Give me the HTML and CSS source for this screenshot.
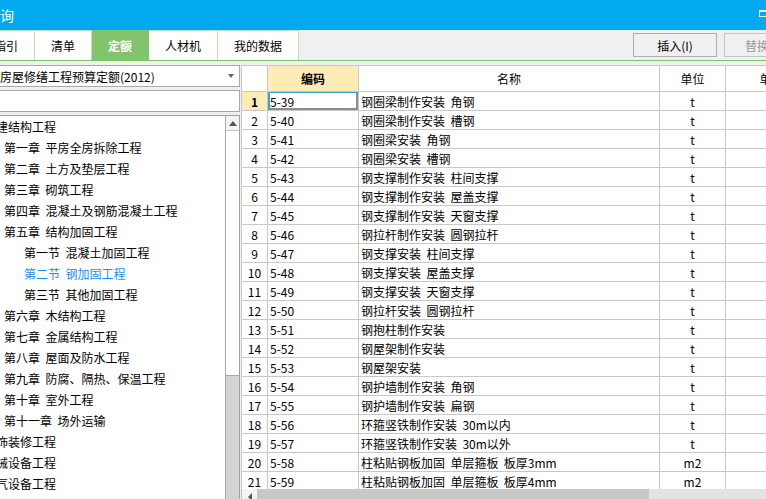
FILE: index.html
```html
<!DOCTYPE html>
<html lang="zh-CN">
<head>
<meta charset="utf-8">
<title>查询</title>
<link rel="stylesheet" href="styles.css">
</head>
<body>
<div class="app">
  <div class="titlebar">
    <span class="title">查询</span>
    <span class="max-icon"></span>
  </div>
  <div class="tabbar">
    <div class="tabs">
      <div class="tab first">指引</div>
      <div class="tab">清单</div>
      <div class="tab active">定额</div>
      <div class="tab">人材机</div>
      <div class="tab">我的数据</div>
    </div>
    <div class="actions">
      <button class="btn">插入(I)</button>
      <button class="btn disabled">替换</button>
    </div>
  </div>
  <div class="content">
    <div class="left">
      <div class="select">
        <span class="select-text">北京市房屋修缮工程预算定额(2012)</span>
        <span class="caret"></span>
      </div>
      <div class="search"></div>
      <div class="tree">
        <ul class="tree-list">
          <li class="l0">土建结构工程</li>
          <li class="l1">第一章  平房全房拆除工程</li>
          <li class="l1">第二章  土方及垫层工程</li>
          <li class="l1">第三章  砌筑工程</li>
          <li class="l1">第四章  混凝土及钢筋混凝土工程</li>
          <li class="l1">第五章  结构加固工程</li>
          <li class="l2">第一节  混凝土加固工程</li>
          <li class="l2 selected">第二节  钢加固工程</li>
          <li class="l2">第三节  其他加固工程</li>
          <li class="l1">第六章  木结构工程</li>
          <li class="l1">第七章  金属结构工程</li>
          <li class="l1">第八章  屋面及防水工程</li>
          <li class="l1">第九章  防腐、隔热、保温工程</li>
          <li class="l1">第十章  室外工程</li>
          <li class="l1">第十一章  场外运输</li>
          <li class="l0">装饰装修工程</li>
          <li class="l0">机械设备工程</li>
          <li class="l0">电气设备工程</li>
        </ul>
        <div class="vscroll">
          <div class="vs-up"><span class="tri-up"></span></div>
          <div class="vs-thumb"></div>
        </div>
      </div>
    </div>
    <div class="right">
      <div class="grid-wrap">
        <table class="grid">
          <colgroup>
            <col class="c-num"><col class="c-code"><col class="c-name"><col class="c-unit"><col class="c-price"><col class="c-rest">
          </colgroup>
          <thead>
            <tr>
              <th class="corner"></th>
              <th class="hl">编码</th>
              <th>名称</th>
              <th>单位</th>
              <th>单价</th>
              <th></th>
            </tr>
          </thead>
          <tbody>
            <tr><td class="num cur">1</td><td class="code focus">5-39</td><td class="name">钢圈梁制作安装  角钢</td><td class="unit">t</td><td></td><td></td></tr>
            <tr><td class="num">2</td><td class="code">5-40</td><td class="name">钢圈梁制作安装  槽钢</td><td class="unit">t</td><td></td><td></td></tr>
            <tr><td class="num">3</td><td class="code">5-41</td><td class="name">钢圈梁安装  角钢</td><td class="unit">t</td><td></td><td></td></tr>
            <tr><td class="num">4</td><td class="code">5-42</td><td class="name">钢圈梁安装  槽钢</td><td class="unit">t</td><td></td><td></td></tr>
            <tr><td class="num">5</td><td class="code">5-43</td><td class="name">钢支撑制作安装  柱间支撑</td><td class="unit">t</td><td></td><td></td></tr>
            <tr><td class="num">6</td><td class="code">5-44</td><td class="name">钢支撑制作安装  屋盖支撑</td><td class="unit">t</td><td></td><td></td></tr>
            <tr><td class="num">7</td><td class="code">5-45</td><td class="name">钢支撑制作安装  天窗支撑</td><td class="unit">t</td><td></td><td></td></tr>
            <tr><td class="num">8</td><td class="code">5-46</td><td class="name">钢拉杆制作安装  圆钢拉杆</td><td class="unit">t</td><td></td><td></td></tr>
            <tr><td class="num">9</td><td class="code">5-47</td><td class="name">钢支撑安装  柱间支撑</td><td class="unit">t</td><td></td><td></td></tr>
            <tr><td class="num">10</td><td class="code">5-48</td><td class="name">钢支撑安装  屋盖支撑</td><td class="unit">t</td><td></td><td></td></tr>
            <tr><td class="num">11</td><td class="code">5-49</td><td class="name">钢支撑安装  天窗支撑</td><td class="unit">t</td><td></td><td></td></tr>
            <tr><td class="num">12</td><td class="code">5-50</td><td class="name">钢拉杆安装  圆钢拉杆</td><td class="unit">t</td><td></td><td></td></tr>
            <tr><td class="num">13</td><td class="code">5-51</td><td class="name">钢抱柱制作安装</td><td class="unit">t</td><td></td><td></td></tr>
            <tr><td class="num">14</td><td class="code">5-52</td><td class="name">钢屋架制作安装</td><td class="unit">t</td><td></td><td></td></tr>
            <tr><td class="num">15</td><td class="code">5-53</td><td class="name">钢屋架安装</td><td class="unit">t</td><td></td><td></td></tr>
            <tr><td class="num">16</td><td class="code">5-54</td><td class="name">钢护墙制作安装  角钢</td><td class="unit">t</td><td></td><td></td></tr>
            <tr><td class="num">17</td><td class="code">5-55</td><td class="name">钢护墙制作安装  扁钢</td><td class="unit">t</td><td></td><td></td></tr>
            <tr><td class="num">18</td><td class="code">5-56</td><td class="name">环箍竖铁制作安装  30m以内</td><td class="unit">t</td><td></td><td></td></tr>
            <tr><td class="num">19</td><td class="code">5-57</td><td class="name">环箍竖铁制作安装  30m以外</td><td class="unit">t</td><td></td><td></td></tr>
            <tr><td class="num">20</td><td class="code">5-58</td><td class="name">柱粘贴钢板加固  单层箍板  板厚3mm</td><td class="unit">m2</td><td></td><td></td></tr>
            <tr><td class="num">21</td><td class="code">5-59</td><td class="name">柱粘贴钢板加固  单层箍板  板厚4mm</td><td class="unit">m2</td><td></td><td></td></tr>
          </tbody>
        </table>
      </div>
      <div class="hscroll">
        <div class="hs-left"><span class="tri-left"></span></div>
        <div class="hs-thumb"></div>
      </div>
    </div>
  </div>
</div>
</body>
</html>
```
FILE: styles.css
```css
* { box-sizing: border-box; }
html, body {
  margin: 0;
  padding: 0;
  width: 766px;
  height: 499px;
  overflow: hidden;
}
body {
  font-family: "Noto Sans CJK SC", "Noto Sans", sans-serif;
  font-size: 12px;
  color: #000;
  background: #f0f0f0;
}
.app {
  margin-left: -40px;
  width: 850px;
  height: 506px;
  display: flex;
  flex-direction: column;
}

/* title bar */
.titlebar {
  height: 30px;
  flex: none;
  background: #03a9ef;
  color: #fff;
  font-size: 14px;
  display: flex;
  align-items: center;
  padding-left: 26px;
}
.title { flex: 1; }
.max-icon {
  width: 10px;
  height: 7px;
  border: 1px solid #fff;
  border-top-width: 2px;
  margin-right: 41px;
  margin-bottom: 3px;
}

/* tab bar */
.tabbar {
  height: 31px;
  flex: none;
  display: flex;
  border-bottom: 1px solid #7fc56b;
  background: #f0f0f0;
}
.tabs {
  display: flex;
  margin-left: 17px;
}
.tab {
  display: flex;
  align-items: center;
  padding: 0 16px;
  background: #fff;
  border-top: 1px solid #bfe2ad;
  border-right: 1px solid #bfe2ad;
  font-size: 12px;
}
.tab.first { border-left: 1px solid #bfe2ad; }
.tab.active {
  background: #82c46b;
  border-color: #82c46b;
  color: #fff;
  font-weight: bold;
}
.actions {
  margin-left: auto;
  margin-right: 2px;
  padding-top: 3px;
  display: flex;
  align-items: flex-start;
  gap: 7px;
}
.btn {
  width: 84px;
  height: 24px;
  border: 1px solid #adadad;
  background: #f0f0f0;
  font-family: inherit;
  font-size: 12px;
  color: #000;
  padding: 0;
}
.btn.disabled {
  width: 84px;
  color: #9a9a9a;
  border-color: #c4c4c4;
  text-align: left;
  padding-left: 20px;
}

/* content */
.content {
  flex: 1;
  min-height: 0;
  display: flex;
  padding-top: 4px;
}
.left {
  width: 280px;
  flex: none;
  margin-right: 1px;
  display: flex;
  flex-direction: column;
  gap: 3px;
}
.select, .search {
  height: 22px;
  flex: none;
  border: 1px solid #a8a8a8;
  background: #fff;
}
.select {
  display: flex;
  align-items: center;
  padding-left: 3px;
  padding-right: 5px;
}
.select-text { flex: 1; white-space: nowrap; }
.caret {
  width: 0;
  height: 0;
  border-left: 3px solid transparent;
  border-right: 3px solid transparent;
  border-top: 4px solid #666;
}
.tree {
  flex: 1;
  min-height: 0;
  display: flex;
  border: 1px solid #a0a0a0;
  background: #fff;
}
.tree-list {
  flex: 1;
  list-style: none;
  margin: 0;
  padding: 0;
  overflow: hidden;
}
.tree-list li {
  height: 21px;
  line-height: 21px;
  white-space: pre;
}
.tree-list .l0 { padding-left: 23px; }
.tree-list .l1 { padding-left: 43px; }
.tree-list .l2 { padding-left: 63px; }
.tree-list .selected { color: #1590f0; }
.vscroll {
  width: 14px;
  flex: none;
  border-left: 1px solid #a8a8a8;
  background: #d4d4d4;
  display: flex;
  flex-direction: column;
}
.vs-up {
  height: 15px;
  background: #f4f4f4;
  border-bottom: 1px solid #c4c4c4;
  display: flex;
  align-items: center;
  justify-content: center;
}
.tri-up {
  width: 0;
  height: 0;
  border-left: 4px solid transparent;
  border-right: 4px solid transparent;
  border-bottom: 5px solid #555;
}
.vs-thumb {
  height: 245px;
  background: #fff;
  border-bottom: 1px solid #a8a8a8;
}

/* right grid */
.right {
  flex: 1;
  min-width: 0;
  display: flex;
  flex-direction: column;
  background: #fff;
}
.grid-wrap {
  flex: 1;
  min-height: 0;
  overflow: hidden;
}
.grid {
  border-collapse: collapse;
  table-layout: fixed;
  width: 676px;
}
.c-num { width: 26px; }
.c-code { width: 91px; }
.c-name { width: 301px; }
.c-unit { width: 66px; }
.c-price { width: 92px; }
.c-rest { width: 100px; }
.grid th, .grid td {
  border: 1px solid #c8c8c8;
  padding: 0;
  font-size: 12px;
  white-space: pre;
  overflow: hidden;
}
.grid th {
  height: 26px;
  font-weight: normal;
  text-align: center;
  background: #fff;
}
.grid th.hl {
  background: #fdecb4;
  font-weight: bold;
}
.grid td { height: 19px; line-height: 17px; }
.grid td.num { text-align: center; }
.grid td.cur { background: #fdecb4; font-weight: bold; }
.grid td.code, .grid td.name { padding-left: 2px; }
.grid td.unit { text-align: center; }
.grid td.focus {
  box-shadow: inset 2px 1px 0 #3a9fdd, inset -2px -2px 0 #8c8c8c;
}

/* horizontal scrollbar */
.hscroll {
  height: 17px;
  flex: none;
  display: flex;
  background: #e3e3e3;
  border-left: 1px solid #c0c0c0;
}
.hs-left {
  width: 15px;
  background: #f4f4f4;
  display: flex;
  align-items: flex-start;
  justify-content: center;
  padding-top: 4px;
}
.tri-left {
  width: 0;
  height: 0;
  border-top: 4px solid transparent;
  border-bottom: 4px solid transparent;
  border-right: 4px solid #555;
}
.hs-thumb {
  width: 392px;
  background: #c8c8c8;
}
```
